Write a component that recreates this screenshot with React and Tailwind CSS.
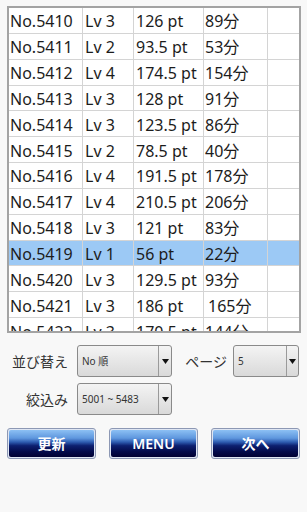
// Score list screen: scrolling table, filter spinners and a row of buttons

const rows = [
  ['No.5410', 'Lv 3', '126 pt', '89分'],
  ['No.5411', 'Lv 2', '93.5 pt', '53分'],
  ['No.5412', 'Lv 4', '174.5 pt', '154分'],
  ['No.5413', 'Lv 3', '128 pt', '91分'],
  ['No.5414', 'Lv 3', '123.5 pt', '86分'],
  ['No.5415', 'Lv 2', '78.5 pt', '40分'],
  ['No.5416', 'Lv 4', '191.5 pt', '178分'],
  ['No.5417', 'Lv 4', '210.5 pt', '206分'],
  ['No.5418', 'Lv 3', '121 pt', '83分'],
  ['No.5419', 'Lv 1', '56 pt', '22分'],
  ['No.5420', 'Lv 3', '129.5 pt', '93分'],
  ['No.5421', 'Lv 3', '186 pt', '165分'],
  ['No.5422', 'Lv 3', '170.5 pt', '144分'],
];

const SELECTED = 'No.5419';

function Spinner({ value, width, arrowWidth }) {
  return (
    <div
      className={`flex h-[32px] rounded-[3px] border border-[#8a8a8a] bg-gradient-to-b from-[#f4f4f4] to-[#d9d9d9] ${width}`}
    >
      <div className="flex flex-1 items-center pl-[4px] text-[10px] text-[#333]">{value}</div>
      <div className={`flex items-center justify-center border-l border-[#9a9a9a] ${arrowWidth}`}>
        <svg width="7" height="5" viewBox="0 0 7 5">
          <path d="M0 0 L7 0 L3.5 5 Z" fill="#111" />
        </svg>
      </div>
    </div>
  );
}

function BlueButton({ children }) {
  return (
    <button className="h-[31px] w-[89px] rounded-[3px] border border-[#8d98b4] p-[1px] bg-[#dfe6f3]">
      <div className="flex h-full w-full items-center justify-center rounded-[2px] bg-[linear-gradient(to_bottom,#8cc0f4_0%,#5f97de_30%,#2d5bb0_45%,#0d2070_58%,#030a4a_80%,#000033_100%)] text-[14px] font-semibold text-white">
        {children}
      </div>
    </button>
  );
}

export default function App() {
  return (
    <div
      className="h-[512px] w-[307px] overflow-hidden bg-[#f8f8f8] pt-[6px]"
      style={{ fontFamily: '"Noto Sans", "Noto Sans CJK JP", sans-serif' }}
    >
      {/* Table */}
      <div className="ml-[7px] h-[327px] w-[294px] overflow-hidden border-2 border-[#a3a3a3] bg-white">
        {rows.map((r) => (
          <div
            key={r[0]}
            className={`flex h-[25.85px] border-b border-[#d4d4d4] text-[16px] leading-none text-[#1c1c1c] ${
              r[0] === SELECTED ? 'bg-[#9cc9f5]' : ''
            }`}
          >
            <div className="flex w-[74px] items-center border-r border-[#d4d4d4] pl-[1px] pt-[2px]">{r[0]}</div>
            <div className="flex w-[51px] items-center border-r border-[#d4d4d4] pl-[2px] pt-[2px]">{r[1]}</div>
            <div className="flex w-[70px] items-center border-r border-[#d4d4d4] pl-[2px] pt-[2px]">{r[2]}</div>
            <div
              className={`flex w-[64px] items-center border-r border-[#d4d4d4] pt-[2px] ${
                r[0] === 'No.5421' ? 'pl-[4px]' : 'pl-[1px]'
              }`}
            >
              {r[3]}
            </div>
            <div className="flex-1" />
          </div>
        ))}
      </div>

      {/* Filters */}
      <div className="mt-[12px] flex items-center">
        <div className="w-[68px] text-right text-[14px] text-[#333]">並び替え</div>
        <div className="ml-[9px]">
          <Spinner value="No 順" width="w-[95px]" arrowWidth="w-[13px]" />
        </div>
        <div className="w-[55px] text-right text-[14px] text-[#333]">ページ</div>
        <div className="ml-[6px]">
          <Spinner value="5" width="w-[66px]" arrowWidth="w-[12px]" />
        </div>
      </div>
      <div className="mt-[6px] flex items-center">
        <div className="w-[68px] text-right text-[14px] text-[#333]">絞込み</div>
        <div className="ml-[9px]">
          <Spinner value="5001 ~ 5483" width="w-[95px]" arrowWidth="w-[13px]" />
        </div>
      </div>

      {/* Buttons */}
      <div className="mt-[13px] flex gap-[13px] pl-[7px]">
        <BlueButton>更新</BlueButton>
        <BlueButton>MENU</BlueButton>
        <BlueButton>次へ</BlueButton>
      </div>
    </div>
  );
}
